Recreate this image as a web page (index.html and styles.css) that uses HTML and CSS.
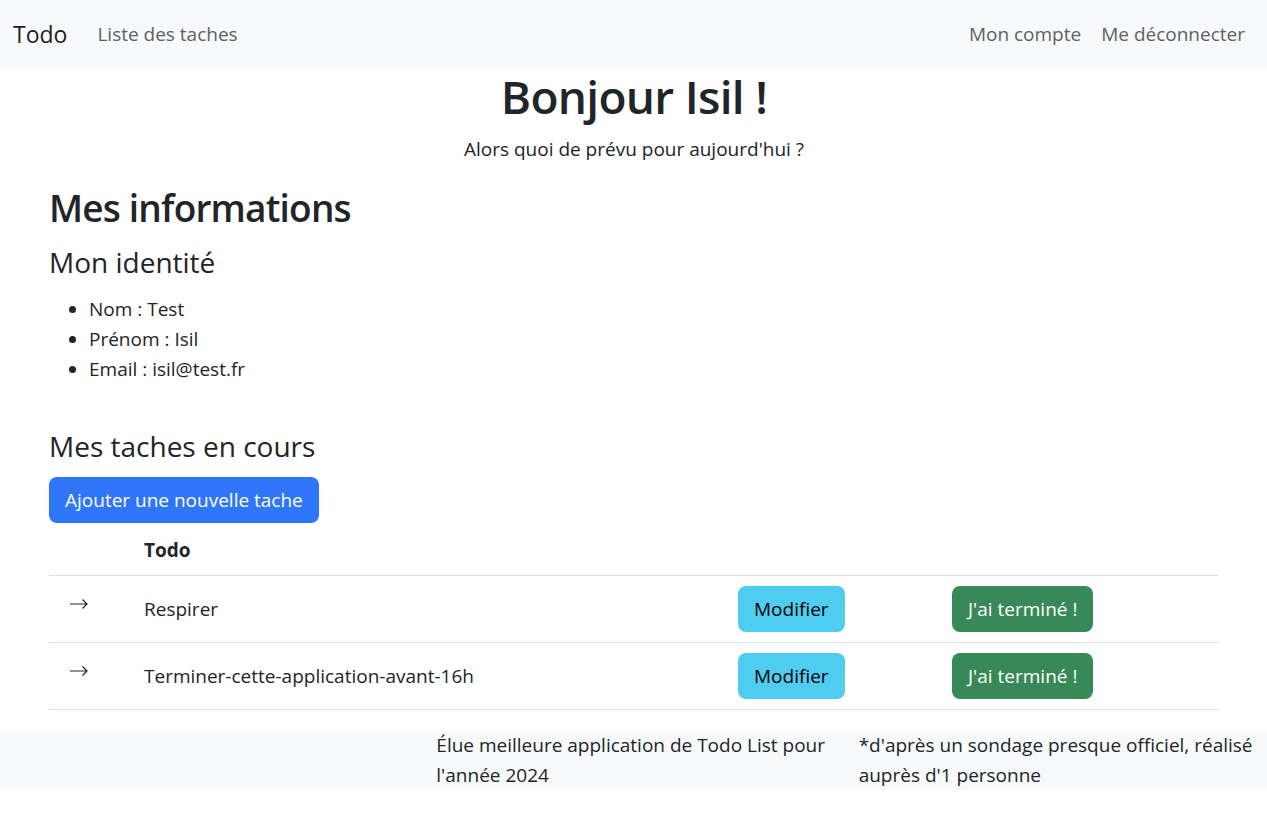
FILE: index.html
```html
<!DOCTYPE html>
<html lang="fr">
<head>
<meta charset="utf-8">
<title>Todo</title>
<link rel="stylesheet" href="styles.css">
</head>
<body>
<nav class="navbar">
  <div class="nav-left">
    <a class="brand" href="#">Todo</a>
    <a class="nav-link" href="#">Liste des taches</a>
  </div>
  <div class="nav-right">
    <a class="nav-link" href="#">Mon compte</a>
    <a class="nav-link" href="#">Me déconnecter</a>
  </div>
</nav>
<main class="container">
  <h1 class="title">Bonjour Isil !</h1>
  <p class="lead">Alors quoi de prévu pour aujourd'hui ?</p>
  <h2 class="h2">Mes informations</h2>
  <h4 class="h4 ident-title">Mon identité</h4>
  <ul class="info">
    <li>Nom : Test</li>
    <li>Prénom : Isil</li>
    <li>Email : isil@test.fr</li>
  </ul>
  <h4 class="h4 tasks-title">Mes taches en cours</h4>
  <a class="btn btn-primary" href="#">Ajouter une nouvelle tache</a>
  <table class="table">
    <thead>
      <tr><th class="c1"></th><th class="c2">Todo</th><th class="c3"></th><th class="c4"></th></tr>
    </thead>
    <tbody>
      <tr>
        <td class="arrow"><svg width="18" height="10" viewBox="0 0 18 10"><path d="M0 5H17M12.5 0.5L17 5L12.5 9.5" fill="none" stroke="#212529" stroke-width="1.2"/></svg></td>
        <td>Respirer</td>
        <td><a class="btn btn-info" href="#">Modifier</a></td>
        <td><a class="btn btn-success" href="#">J'ai terminé !</a></td>
      </tr>
      <tr>
        <td class="arrow"><svg width="18" height="10" viewBox="0 0 18 10"><path d="M0 5H17M12.5 0.5L17 5L12.5 9.5" fill="none" stroke="#212529" stroke-width="1.2"/></svg></td>
        <td>Terminer-cette-application-avant-16h</td>
        <td><a class="btn btn-info" href="#">Modifier</a></td>
        <td><a class="btn btn-success" href="#">J'ai terminé !</a></td>
      </tr>
    </tbody>
  </table>
</main>
<footer class="footer">
  <div class="col"></div>
  <div class="col">Élue meilleure application de Todo List pour l'année 2024</div>
  <div class="col">*d'après un sondage presque officiel, réalisé auprès d'1 personne</div>
</footer>
</body>
</html>
```
FILE: styles.css
```css
* { box-sizing: border-box; }
html, body { margin: 0; padding: 0; }
body {
  font-family: "Open Sans", "Noto Sans", sans-serif;
  font-size: 19px;
  line-height: 30px;
  color: #212529;
  background: #fff;
}
a { text-decoration: none; }

.navbar {
  height: 68px;
  background: #f8f9fa;
  display: flex;
  align-items: center;
  justify-content: space-between;
  padding: 0 12px 0 13px;
}
.nav-left, .nav-right { display: flex; align-items: center; }
.brand {
  font-size: 23px;
  color: rgba(0,0,0,.9);
  margin-right: 20px;
  line-height: 36px;
}
.nav-link {
  color: #5e6165;
  padding: 0 10px;
}

.container { padding: 0 48px 0 49px; }
.title {
  margin: 0 0 10px;
  text-align: center;
  font-size: 46px;
  font-weight: 600;
  letter-spacing: -0.7px;
  line-height: 56px;
}
.lead { margin: 0 0 20px; text-align: center; }
.h2 {
  margin: 0 0 12px;
  font-size: 37px;
  font-weight: 600;
  letter-spacing: -0.8px;
  line-height: 48px;
}
.h4 { margin: 0; font-size: 28px; font-weight: 400; line-height: 36px; }
.ident-title { margin-bottom: 14px; }
.info { margin: 0 0 20px; padding-left: 40px; }
.tasks-title { margin-top: 44px; margin-bottom: 13px; }

.btn {
  display: inline-block;
  padding: 8px 16px;
  font-size: 19px;
  line-height: 30px;
  border-radius: 8px;
}
.btn-primary { background: #2f76fb; color: #fff; }
.btn-info { background: #4ecdf0; color: #000; }
.btn-success { background: #378a57; color: #fff; }

.table {
  width: 100%;
  border-collapse: collapse;
  margin: 2px 0 20px;
}
.table th, .table td {
  padding: 10px;
  border-bottom: 1px solid #dee2e6;
  text-align: left;
  vertical-align: middle;
}
.table th { font-weight: 700; }
.c1 { width: 85px; }
.c2 { width: 594px; }
.c3 { width: 214px; }
.c4 { width: 277px; }
.table td.arrow { padding-left: 21px; }
.arrow svg { display: block; position: relative; top: -5px; }

.footer {
  background: #f8f9fa;
  display: grid;
  grid-template-columns: 1fr 1fr 1fr;
}
.footer .col { padding: 0 12px 0 14px; }
```
